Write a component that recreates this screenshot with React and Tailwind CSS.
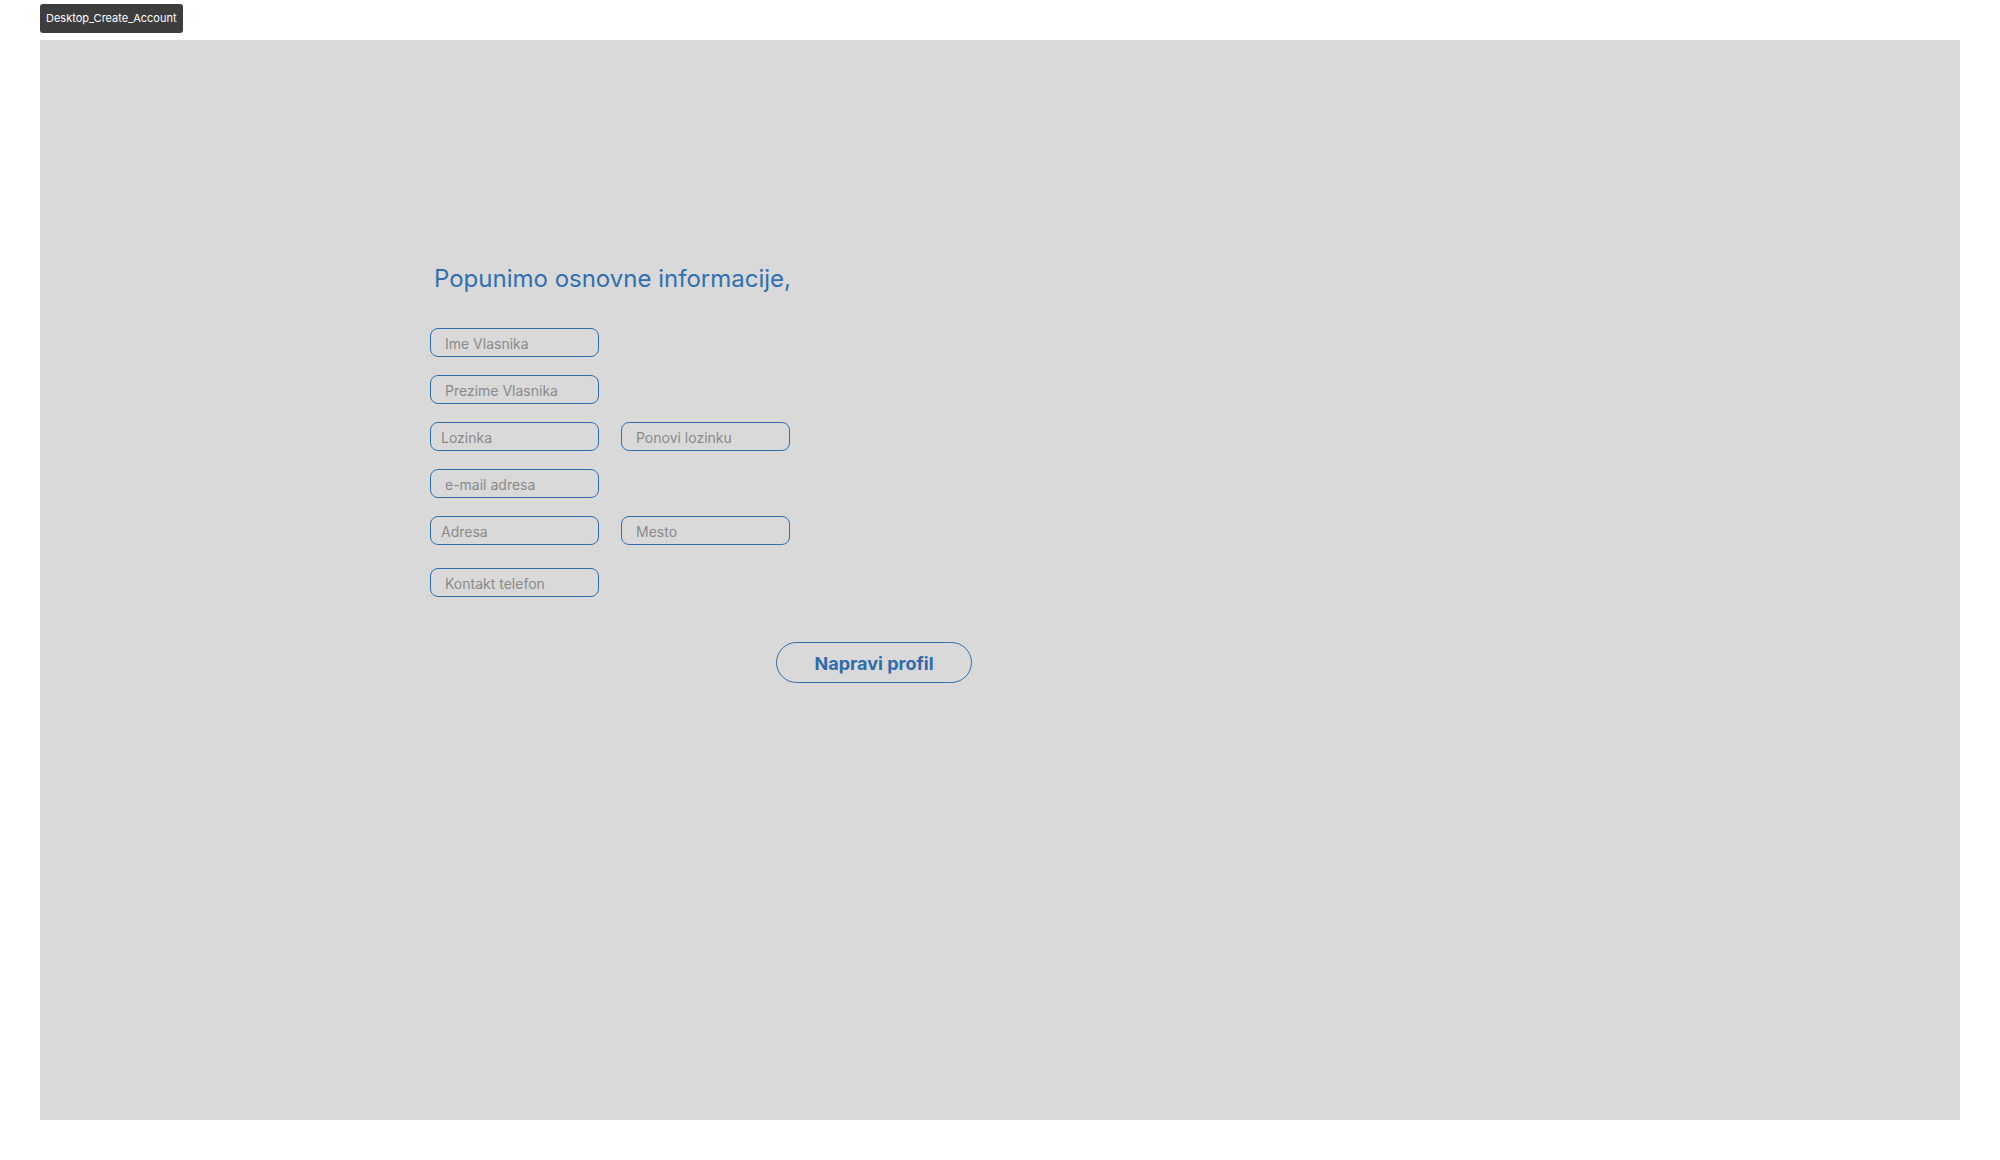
import React from "react";

const Field = ({ label, indent = "pl-[14px]" }) => (
  <div
    className={`w-[169px] h-[29px] rounded-[8px] border-[1.5px] border-[#2f6fae] flex items-center pt-[3px] ${indent}`}
  >
    <span className="text-[14px] leading-none text-[#8a8a8a]">{label}</span>
  </div>
);

const App = () => {
  return (
    <div className="min-h-[1160px] bg-white font-['Inter','Noto_Sans',sans-serif]">
      {/* Frame label */}
      <div className="h-[40px] pl-[40px] pt-[4px]">
        <div className="inline-flex h-[29px] px-[6px] items-center rounded-[3px] bg-[#3d3d3d] text-white text-[11px]">
          Desktop_Create_Account
        </div>
      </div>

      {/* Frame */}
      <div className="ml-[40px] w-[1920px] h-[1080px] bg-[#d9d9d9] pl-[390px] pt-[223px]">
        <h1 className="pl-[4px] text-[24px] leading-[32px] text-[#2f70b0] font-normal">
          Popunimo osnovne informacije,
        </h1>

        <div className="mt-[33px] flex flex-col gap-[18px]">
          <Field label="Ime Vlasnika" />
          <Field label="Prezime Vlasnika" />
          <div className="flex gap-[22px]">
            <Field label="Lozinka" indent="pl-[10px]" />
            <Field label="Ponovi lozinku" indent="pl-[14px]" />
          </div>
          <Field label="e-mail adresa" />
          <div className="flex gap-[22px]">
            <Field label="Adresa" indent="pl-[10px]" />
            <Field label="Mesto" indent="pl-[14px]" />
          </div>
          <div className="mt-[5px]">
            <Field label="Kontakt telefon" />
          </div>
        </div>

        <div className="mt-[45px] pl-[346px]">
          <button className="w-[196px] h-[41px] rounded-full border-[1.5px] border-[#2f6fae] pt-[2px] text-[18px] font-bold text-[#2f6daa]">
            Napravi profil
          </button>
        </div>
      </div>
    </div>
  );
};

export default App;
